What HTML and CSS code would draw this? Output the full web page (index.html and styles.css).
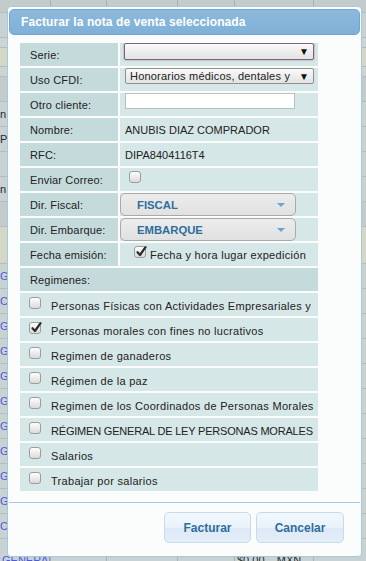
FILE: index.html
```html
<!DOCTYPE html>
<html lang="es">
<head>
    <meta charset="UTF-8">
    <meta name="viewport" content="width=device-width, initial-scale=1.0">
    <title>Facturar nota de venta</title>
    <link rel="stylesheet" href="styles.css">
</head>
<body>
    <!-- page behind the modal -->
    <div class="page">
        <div class="bg-row bg-head"><span></span><span></span><span></span><span></span><span></span><span></span></div>
        <div class="bg-row bg-tall"><span></span><span></span><span></span><span></span><span></span><span></span></div>
        <div class="bg-row bg-thin"><span></span><span></span><span></span><span></span><span></span><span></span></div>
        <div class="bg-row bg-beige"><span></span><span></span><span></span><span></span><span></span><span></span></div>
        <div class="bg-row bg-thin"><span></span><span></span><span></span><span></span><span></span><span></span></div>
        <div class="bg-row bg-head bg-tall"><span></span><span></span><span></span><span></span><span></span><span></span></div>
        <div class="bg-row bg-tall"><span class="dark">n</span><span></span><span></span><span></span><span></span><span></span></div>
        <div class="bg-row bg-tall"><span class="dark">P'</span><span></span><span></span><span></span><span></span><span></span></div>
        <div class="bg-row bg-tall"><span></span><span></span><span></span><span></span><span></span><span class="dark">:</span></div>
        <div class="bg-row bg-tall"><span class="dark">n</span><span></span><span></span><span></span><span></span><span></span></div>
        <div class="bg-row bg-head bg-tall"><span></span><span></span><span></span><span></span><span></span><span></span></div>
        <div class="bg-row bg-beige bg-beige-tall"><span></span><span></span><span></span><span></span><span></span><span></span></div>
        <div class="bg-row bg-link"><span>G</span><span></span><span></span><span></span><span></span><span class="dark">t</span></div>
        <div class="bg-row bg-link"><span>C</span><span></span><span></span><span></span><span></span><span></span></div>
        <div class="bg-row bg-link"><span>G</span><span></span><span></span><span></span><span></span><span></span></div>
        <div class="bg-row bg-link"><span>G</span><span></span><span></span><span></span><span></span><span>S</span></div>
        <div class="bg-row bg-link"><span>G</span><span></span><span></span><span></span><span></span><span>-N</span></div>
        <div class="bg-row bg-link"><span>G</span><span></span><span></span><span></span><span></span><span>S</span></div>
        <div class="bg-row bg-link"><span>G</span><span></span><span></span><span></span><span></span><span></span></div>
        <div class="bg-row bg-link"><span>G</span><span></span><span></span><span></span><span></span><span></span></div>
        <div class="bg-row bg-link"><span>G</span><span></span><span></span><span></span><span></span><span></span></div>
        <div class="bg-row bg-link"><span>G</span><span></span><span></span><span></span><span></span><span></span></div>
        <div class="bg-row bg-link"><span>C</span><span></span><span></span><span></span><span></span><span></span></div>
        <div class="bg-row bg-link bg-last"><span>GENERAL</span><span></span><span></span><span></span><span class="dark">$0.00&nbsp;&nbsp;&nbsp;&nbsp;MXN</span><span></span></div>
    </div>

    <div class="dialog">
        <div class="titlebar">Facturar la nota de venta seleccionada</div>

        <div class="content">
            <table class="form">
                <tr>
                    <td class="label">Serie:</td>
                    <td class="value top">
                        <div class="select focused"><span class="select-text"></span><span class="select-arrow">▼</span></div>
                    </td>
                </tr>
                <tr>
                    <td class="label">Uso CFDI:</td>
                    <td class="value top">
                        <div class="select"><span class="select-text">Honorarios médicos, dentales y</span><span class="select-arrow">▼</span></div>
                    </td>
                </tr>
                <tr>
                    <td class="label">Otro cliente:</td>
                    <td class="value top"><input type="text" class="text-input"></td>
                </tr>
                <tr>
                    <td class="label">Nombre:</td>
                    <td class="value">ANUBIS DIAZ COMPRADOR</td>
                </tr>
                <tr>
                    <td class="label">RFC:</td>
                    <td class="value">DIPA8404116T4</td>
                </tr>
                <tr>
                    <td class="label">Enviar Correo:</td>
                    <td class="value top"><span class="chk mail-chk"></span></td>
                </tr>
                <tr>
                    <td class="label">Dir. Fiscal:</td>
                    <td class="value combo-cell">
                        <div class="combo"><span>FISCAL</span><span class="combo-arrow"></span></div>
                    </td>
                </tr>
                <tr>
                    <td class="label">Dir. Embarque:</td>
                    <td class="value combo-cell">
                        <div class="combo"><span>EMBARQUE</span><span class="combo-arrow"></span></div>
                    </td>
                </tr>
                <tr>
                    <td class="label">Fecha emisión:</td>
                    <td class="value top">
                        <div class="fecha">
                            <span class="chk checked"><svg viewBox="0 0 12 12" width="12" height="12"><path d="M2.5 6.2 L5 9 L10.5 1.2" fill="none" stroke="#2b2b2b" stroke-width="2.2" stroke-linecap="round" stroke-linejoin="round"/></svg></span>
                            <span class="fecha-text">Fecha y hora lugar expedición</span>
                        </div>
                    </td>
                </tr>
                <tr>
                    <td class="label" colspan="2">Regimenes:</td>
                </tr>
                <tr>
                    <td class="value reg-cell" colspan="2"><div class="reg"><span class="chk"></span><span class="reg-text">Personas Físicas con Actividades Empresariales y</span></div></td>
                </tr>
                <tr>
                    <td class="value reg-cell" colspan="2"><div class="reg"><span class="chk checked"><svg viewBox="0 0 12 12" width="12" height="12"><path d="M2.5 6.2 L5 9 L10.5 1.2" fill="none" stroke="#2b2b2b" stroke-width="2.2" stroke-linecap="round" stroke-linejoin="round"/></svg></span><span class="reg-text">Personas morales con fines no lucrativos</span></div></td>
                </tr>
                <tr>
                    <td class="value reg-cell" colspan="2"><div class="reg"><span class="chk"></span><span class="reg-text">Regimen de ganaderos</span></div></td>
                </tr>
                <tr>
                    <td class="value reg-cell" colspan="2"><div class="reg"><span class="chk"></span><span class="reg-text">Régimen de la paz</span></div></td>
                </tr>
                <tr>
                    <td class="value reg-cell" colspan="2"><div class="reg"><span class="chk"></span><span class="reg-text">Regimen de los Coordinados de Personas Morales</span></div></td>
                </tr>
                <tr>
                    <td class="value reg-cell" colspan="2"><div class="reg"><span class="chk"></span><span class="reg-text caps">RÉGIMEN GENERAL DE LEY PERSONAS MORALES</span></div></td>
                </tr>
                <tr>
                    <td class="value reg-cell" colspan="2"><div class="reg"><span class="chk"></span><span class="reg-text">Salarios</span></div></td>
                </tr>
                <tr>
                    <td class="value reg-cell" colspan="2"><div class="reg"><span class="chk"></span><span class="reg-text">Trabajar por salarios</span></div></td>
                </tr>
            </table>
        </div>

        <div class="buttonpane">
            <button class="btn btn-ok">Facturar</button>
            <button class="btn">Cancelar</button>
        </div>
    </div>
</body>
</html>
```

FILE: styles.css
```css
html, body {
    height: 561px;
    overflow: hidden;
}

body {
    margin: 0;
    position: relative;
    font-family: "Liberation Sans", Arial, sans-serif;
    background-color: #c8d2d2;
}

/* background page, seen through the overlay */
.page {
    display: flex;
    flex-direction: column;
}

.bg-row {
    display: flex;
    flex-shrink: 0;
    height: 12px;
    border-bottom: 1px solid #b3bdbd;
    font-size: 11px;
    color: #2c3490;
}

.bg-row span {
    box-sizing: border-box;
    border-right: 1px solid #a9b1b1;
    overflow: hidden;
    white-space: nowrap;
    line-height: 24px;
}

.bg-row span:nth-child(1) { width: 51px; }
.bg-row span:nth-child(2) { width: 56px; }
.bg-row span:nth-child(3) { width: 71px; }
.bg-row span:nth-child(4) { width: 57px; }
.bg-row span:nth-child(5) { width: 79px; }
.bg-row span:nth-child(6) { width: 52px; border-right: none; }

.bg-row span.dark {
    color: #2a2a2a;
}

.bg-head {
    background-color: #c3cbcb;
}

.bg-tall {
    height: 24px;
}

.bg-thin {
    height: 9px;
    background-color: #ccd4d4;
}

.bg-beige {
    height: 18px;
    background-color: #d3d8c6;
}

.bg-beige-tall {
    height: 36px;
}

.bg-link {
    height: 24px;
    color: #4f5ad8;
}

.bg-last {
    height: 30px;
}

.bg-last span {
    line-height: 42px;
    padding-left: 2px;
}

/* modal dialog */
.dialog {
    position: absolute;
    left: 7px;
    top: 6px;
    width: 351px;
    padding: 2px 1px;
    border: 1px solid #a6c9e2;
    border-radius: 4px;
    background-color: #fbfdfd;
}

.titlebar {
    height: 24px;
    display: flex;
    align-items: center;
    padding-left: 11px;
    border: 1px solid #73a6d3;
    border-radius: 5px;
    background: linear-gradient(#8dbadd, #7fb0d7);
    color: white;
    font-weight: bold;
    font-size: 12px;
    letter-spacing: 0.1px;
}

.content {
    padding: 6px 0 0 9px;
}

.form {
    width: 302px;
    table-layout: fixed;
    border-collapse: separate;
    border-spacing: 2px;
    font-size: 11px;
    color: #222;
}

.form td {
    height: 23px;
    padding: 0;
    vertical-align: middle;
    white-space: nowrap;
}

.label {
    width: 88px;
    padding-left: 10px !important;
    background-color: #c5dbdb;
    letter-spacing: 0.15px;
}

.value {
    width: 193px;
    padding-left: 5px !important;
    background-color: #d6e7e7;
    overflow: hidden;
}

.value.top {
    vertical-align: top;
}

.select {
    box-sizing: border-box;
    display: flex;
    align-items: center;
    width: 189px;
    height: 16px;
    padding: 0 4px;
    border: 1px solid #8f8f8f;
    border-radius: 2px;
    background: linear-gradient(#f9f9f9, #e3e3e3);
    font-size: 11px;
    color: #222;
}

.select.focused {
    width: 190px;
    height: 17px;
    margin-left: -1px;
    border-color: #7e6479;
    box-shadow: 0 0 1px 1px rgba(160, 130, 160, 0.35);
}

.select-text {
    flex: 1;
    overflow: hidden;
    white-space: nowrap;
    letter-spacing: 0.2px;
}

.select-arrow {
    width: 12px;
    text-align: right;
    font-size: 10px;
    color: #111;
}

.text-input {
    box-sizing: border-box;
    display: block;
    width: 170px;
    height: 16px;
    margin: 0;
    padding: 0;
    border: 1px solid #bdbdbd;
    background-color: white;
}

.chk {
    box-sizing: border-box;
    display: inline-block;
    width: 12px;
    height: 12px;
    border: 1px solid #9d9d9d;
    border-radius: 3px;
    background: linear-gradient(#fefefe, #dadada);
    position: relative;
    flex-shrink: 0;
}

.chk svg {
    position: absolute;
    left: 0;
    top: -1px;
}

.mail-chk {
    margin: 3px 0 0 4px;
}

.combo-cell {
    padding-left: 0 !important;
}

.combo {
    box-sizing: border-box;
    display: flex;
    justify-content: space-between;
    align-items: center;
    width: 176px;
    height: 23px;
    padding: 0 10px 0 16px;
    border: 1px solid #a9a9a9;
    border-radius: 5px;
    background: linear-gradient(#ececec, #e1e1e1);
    font-weight: bold;
    font-size: 11.3px;
    color: #2e6e9e;
}

.combo-arrow {
    width: 0;
    height: 0;
    border-left: 4px solid transparent;
    border-right: 4px solid transparent;
    border-top: 4px solid #6aa3d6;
}

.fecha {
    display: flex;
    align-items: flex-start;
    padding: 3px 0 0 9px;
}

.fecha-text {
    margin: 3px 0 0 4px;
    letter-spacing: 0.3px;
}

.reg-cell {
    padding-left: 9px !important;
}

.reg {
    display: flex;
    align-items: flex-start;
    height: 23px;
}

.reg .chk {
    margin-top: 4px;
}

.reg-text {
    margin: 6px 0 0 10px;
    line-height: 14px;
    letter-spacing: 0.3px;
    overflow: hidden;
}

.reg-text.caps {
    letter-spacing: -0.2px;
}

.buttonpane {
    display: flex;
    justify-content: flex-end;
    gap: 5px;
    margin-top: 9px;
    padding: 9px 16px 11px 0;
    border-top: 1px solid #a6c9e2;
}

.btn {
    width: 88px;
    height: 31px;
    border: 1px solid #c5dbec;
    border-radius: 5px;
    background: linear-gradient(#f2f8fd 0%, #e9f2fb 50%, #dde9f7 52%, #e4eefa 100%);
    color: #2e6e9e;
    font-family: "Liberation Sans", Arial, sans-serif;
    font-weight: bold;
    font-size: 12px;
    cursor: pointer;
}

.btn-ok {
    width: 87px;
}
```
